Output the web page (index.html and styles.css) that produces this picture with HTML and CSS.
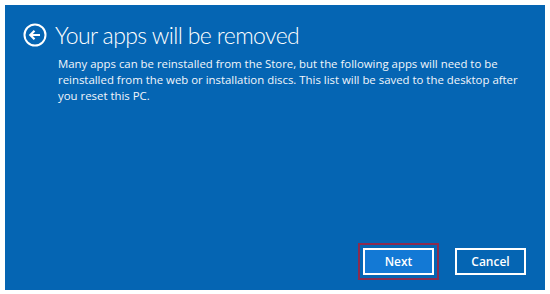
FILE: index.html
```html
<!DOCTYPE html>
<html lang="en">
<head>
    <meta charset="UTF-8">
    <meta name="viewport" content="width=device-width, initial-scale=1.0">
    <title>Reset this PC</title>
    <link rel="stylesheet" href="styles.css">
</head>
<body>
    <div class="panel">
        <div class="heading">
            <svg class="back" width="24" height="24" viewBox="0 0 24 24">
                <circle cx="12" cy="12" r="10.5" fill="none" stroke="#fff" stroke-width="2"/>
                <path d="M17 12H7.5M11.5 7.8L7.3 12l4.2 4.2" fill="none" stroke="#fff" stroke-width="2.2"/>
            </svg>
            <h1>Your apps will be removed</h1>
        </div>
        <p class="info">
            Many apps can be reinstalled from the Store, but the following apps will need to be<br>
            reinstalled from the web or installation discs. This list will be saved to the desktop after<br>
            you reset this PC.
        </p>
        <div class="actions">
            <span class="focus"><a href="#" class="button primary">Next</a></span>
            <a href="#" class="button">Cancel</a>
        </div>
    </div>
</body>
</html>
```

FILE: styles.css
```css
body {
    margin: 0;
    background-color: #ffffff;
    font-family: "Open Sans", "Noto Sans", sans-serif;
}
.panel {
    margin: 5px 5px 0 5px;
    width: 540px;
    height: 285px;
    background-color: #0565b3;
    color: white;
    display: flex;
    flex-direction: column;
}
.heading {
    display: flex;
    align-items: center;
    padding: 15px 0 0 18px;
}
.back {
    margin-right: 8px;
}
h1 {
    margin: 0;
    font-family: Lato, "Open Sans", sans-serif;
    font-size: 23px;
    font-weight: 300;
    line-height: 30px;
    letter-spacing: -0.6px;
}
.info {
    margin: 6px 0 0 53px;
    font-size: 11.4px;
    line-height: 16px;
    color: #f2f6fb;
}
.actions {
    margin-top: auto;
    display: flex;
    justify-content: flex-end;
    align-items: center;
    gap: 16px;
    padding: 0 19px 10px 0;
}
.focus {
    display: block;
    padding: 3px;
    border: 2px solid #8a2b4f;
}
.button {
    display: block;
    box-sizing: border-box;
    width: 71px;
    height: 27px;
    line-height: 23px;
    text-align: center;
    border: 2px solid white;
    color: white;
    text-decoration: none;
    font-size: 12px;
    font-weight: 600;
}
.primary {
    background-color: #1379d5;
}
```
